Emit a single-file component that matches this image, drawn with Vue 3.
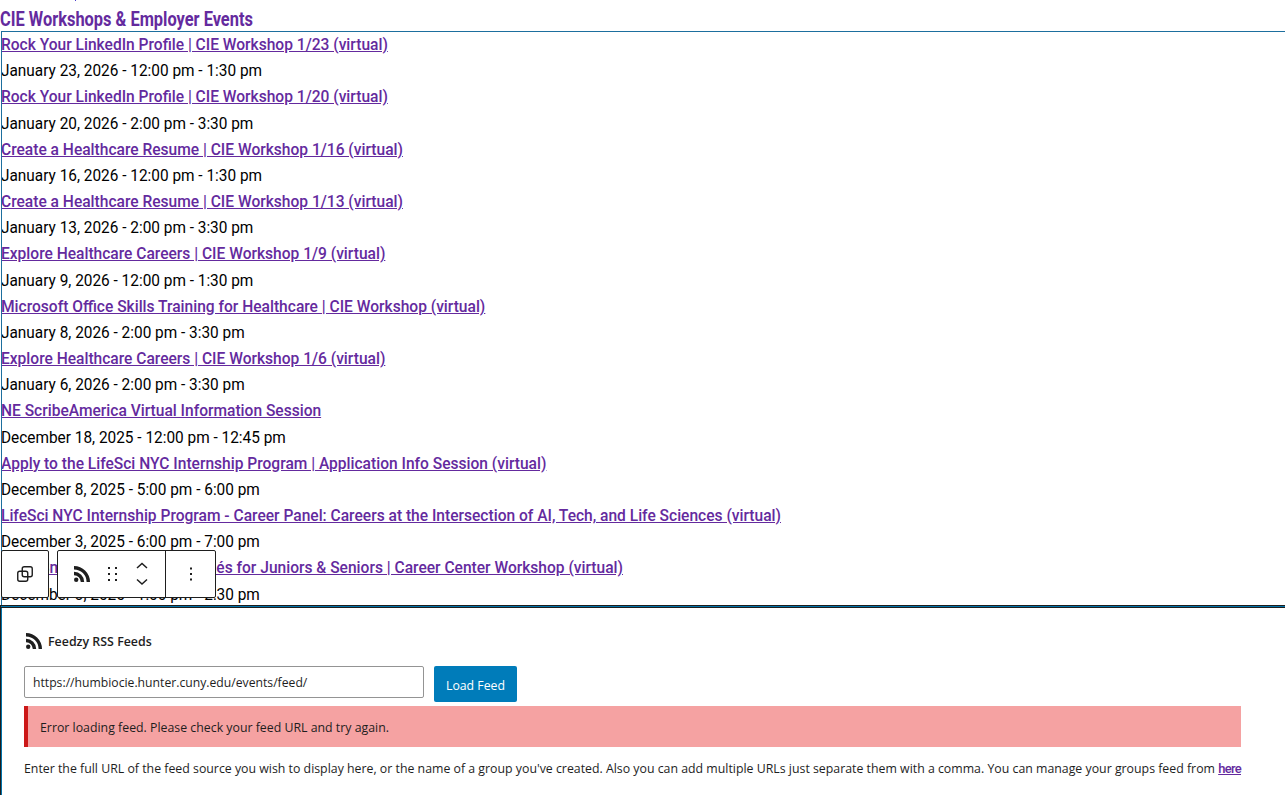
<script setup>
const events = [
  ['Rock Your LinkedIn Profile | CIE Workshop 1/23 (virtual)', 'January 23, 2026 - 12:00 pm - 1:30 pm'],
  ['Rock Your LinkedIn Profile | CIE Workshop 1/20 (virtual)', 'January 20, 2026 - 2:00 pm - 3:30 pm'],
  ['Create a Healthcare Resume | CIE Workshop 1/16 (virtual)', 'January 16, 2026 - 12:00 pm - 1:30 pm'],
  ['Create a Healthcare Resume | CIE Workshop 1/13 (virtual)', 'January 13, 2026 - 2:00 pm - 3:30 pm'],
  ['Explore Healthcare Careers | CIE Workshop 1/9 (virtual)', 'January 9, 2026 - 12:00 pm - 1:30 pm'],
  ['Microsoft Office Skills Training for Healthcare | CIE Workshop (virtual)', 'January 8, 2026 - 2:00 pm - 3:30 pm'],
  ['Explore Healthcare Careers | CIE Workshop 1/6 (virtual)', 'January 6, 2026 - 2:00 pm - 3:30 pm'],
  ['NE ScribeAmerica Virtual Information Session', 'December 18, 2025 - 12:00 pm - 12:45 pm'],
  ['Apply to the LifeSci NYC Internship Program | Application Info Session (virtual)', 'December 8, 2025 - 5:00 pm - 6:00 pm'],
  ['LifeSci NYC Internship Program - Career Panel: Careers at the Intersection of AI, Tech, and Life Sciences (virtual)', 'December 3, 2025 - 6:00 pm - 7:00 pm'],
  ['Build Smarter & Helpful Résumés for Juniors & Seniors | Career Center Workshop (virtual)', 'December 3, 2025 - 1:00 pm - 2:30 pm'],
]
</script>

<template>
  <div class="page">
    <span class="speck"></span>
    <h3 class="title">CIE Workshops &amp; Employer Events</h3>
    <div class="feed">
      <template v-for="e in events" :key="e[0]">
        <a class="link" href="#">{{ e[0] }}</a>
        <div class="date">{{ e[1] }}</div>
      </template>
    </div>
    <div class="toolbar">
      <div class="group single">
        <button class="tool">
          <svg width="24" height="24" viewBox="0 0 24 24" fill="none" stroke="#1e1e1e" stroke-width="1.4"><rect x="4.75" y="9.25" width="10" height="10" rx="2"/><rect x="9.25" y="4.75" width="10" height="10" rx="2"/></svg>
        </button>
      </div>
      <div class="group">
        <div class="mid">
          <svg class="rss" width="20" height="20" viewBox="0 0 20 20" fill="#1e1e1e"><circle cx="4.2" cy="15.8" r="2.2"/><path d="M2 7.8v3.4a6.8 6.8 0 0 1 6.8 6.8h3.4A10.2 10.2 0 0 0 2 7.8z"/><path d="M2 2v3.4A12.6 12.6 0 0 1 14.6 18H18A16 16 0 0 0 2 2z"/></svg>
          <svg class="drag" width="18" height="24" viewBox="0 0 18 24" fill="#1e1e1e"><rect x="5" y="5" width="2" height="2"/><rect x="12" y="5" width="2" height="2"/><rect x="5" y="11" width="2" height="2"/><rect x="12" y="11" width="2" height="2"/><rect x="5" y="17" width="2" height="2"/><rect x="12" y="17" width="2" height="2"/></svg>
          <div class="updown">
            <svg width="24" height="16" viewBox="0 0 24 16" fill="none" stroke="#1e1e1e" stroke-width="1.5"><path d="M7 10 12 5.5l5 4.5"/></svg>
            <svg width="24" height="16" viewBox="0 0 24 16" fill="none" stroke="#1e1e1e" stroke-width="1.5"><path d="M7 5.5 12 10l5-4.5"/></svg>
          </div>
        </div>
        <button class="tool more">
          <svg width="24" height="24" viewBox="0 0 24 24" fill="#1e1e1e"><rect x="11" y="5.5" width="2" height="2"/><rect x="11" y="11" width="2" height="2"/><rect x="11" y="16.5" width="2" height="2"/></svg>
        </button>
      </div>
    </div>
    <section class="panel">
      <div class="head">
        <svg width="20" height="20" viewBox="0 0 20 20" fill="#1e1e1e"><circle cx="4.2" cy="15.8" r="2.2"/><path d="M2 7.8v3.4a6.8 6.8 0 0 1 6.8 6.8h3.4A10.2 10.2 0 0 0 2 7.8z"/><path d="M2 2v3.4A12.6 12.6 0 0 1 14.6 18H18A16 16 0 0 0 2 2z"/></svg>
        <span>Feedzy RSS Feeds</span>
      </div>
      <div class="form">
        <input class="url" value="https://humbiocie.hunter.cuny.edu/events/feed/" />
        <button class="load">Load Feed</button>
      </div>
      <div class="error">Error loading feed. Please check your feed URL and try again.</div>
      <p class="help">Enter the full URL of the feed source you wish to display here, or the name of a group you've created. Also you can add multiple URLs just separate them with a comma. You can manage your groups feed from <a href="#">here</a></p>
    </section>
  </div>
</template>

<style>
html, body { margin: 0; background: #fff; overflow: hidden; }
</style>

<style scoped>
.page {
  position: relative;
  height: 795px;
  overflow: hidden;
  font-family: Roboto, "Liberation Sans", sans-serif;
  background: #fff;
}
.speck {
  position: absolute;
  left: 75px;
  top: 0;
  width: 1px;
  height: 1px;
  background: #4a3fd0;
}
.title {
  margin: 0;
  width: max-content;
  height: 31px;
  box-sizing: border-box;
  padding-top: 9px;
  font-size: 20px;
  line-height: 21px;
  font-weight: 700;
  color: #642a9e;
  transform: scaleX(0.82);
  transform-origin: left top;
}
.feed {
  height: 574px;
  margin-left: 1px;
  overflow: hidden;
  box-sizing: border-box;
  border-top: 1px solid #1d6f9e;
  border-left: 1px solid #1d6f9e;
  line-height: 26.17px;
}
.link {
  display: block;
  width: max-content;
  margin-left: -1px;
  font-size: 17px;
  color: #642a9e;
  font-weight: 500;
  text-decoration: underline;
  transform: scaleX(0.915);
  transform-origin: left center;
}
.link:first-child { margin-top: -1px; }
.date {
  width: max-content;
  margin-left: -1px;
  font-size: 17px;
  color: #000;
  transform: scaleX(0.905);
  transform-origin: left center;
}
.toolbar {
  position: absolute;
  left: 1px;
  top: 550px;
  display: flex;
  gap: 8px;
}
.group {
  display: flex;
  height: 48px;
  background: #fff;
  border: 1px solid #1e1e1e;
  box-sizing: border-box;
  border-radius: 2px;
}
.single { width: 48px; justify-content: center; align-items: center; }
.tool { border: 0; background: none; padding: 0; display: flex; align-items: center; justify-content: center; }
.mid {
  display: flex;
  align-items: center;
  width: 108px;
  box-sizing: border-box;
  padding-left: 14px;
  border-right: 1px solid #1e1e1e;
}
.drag { margin-left: 11px; }
.updown { display: flex; flex-direction: column; margin-left: 9px; }
.more { width: 49px; }
.panel {
  height: 190px;
  box-sizing: border-box;
  border-top: 1px solid #1e1e1e;
  border-left: 1px solid #1e1e1e;
  box-shadow: inset 0 1px 0 #0073aa, inset 0 2px 0 #1e1e1e, inset 1px 0 0 #0073aa;
  padding: 25px 44px 0 23px;
  font-family: "Open Sans", "Noto Sans", sans-serif;
  font-size: 12.33px;
  color: #1e1e1e;
}
.head {
  display: flex;
  align-items: center;
  gap: 4px;
  height: 20px;
  font-size: 12.4px;
  font-weight: 600;
}
.form { display: flex; gap: 10px; margin-top: 15px; }
.url {
  width: 400px;
  height: 32px;
  box-sizing: border-box;
  border: 1px solid #949494;
  border-radius: 2px;
  padding: 0 8px;
  font: 12.2px "Open Sans", sans-serif;
  color: #1e1e1e;
}
.load {
  width: 83px;
  height: 36px;
  padding: 2px 0 0;
  border: 0;
  border-radius: 2px;
  background: #007cba;
  color: #fff;
  font: 12.3px "Open Sans", sans-serif;
}
.error {
  margin-top: 4px;
  height: 41px;
  line-height: 43px;
  box-sizing: border-box;
  padding-left: 12px;
  border-left: 4px solid #cc1818;
  background: #f5a2a2;
}
.help { margin: 13px 0 0; line-height: 18px; white-space: nowrap; }
.help a {
  font-family: Roboto, sans-serif;
  font-size: 13px;
  font-weight: 500;
  letter-spacing: -0.7px;
  color: #642a9e;
}
</style>
